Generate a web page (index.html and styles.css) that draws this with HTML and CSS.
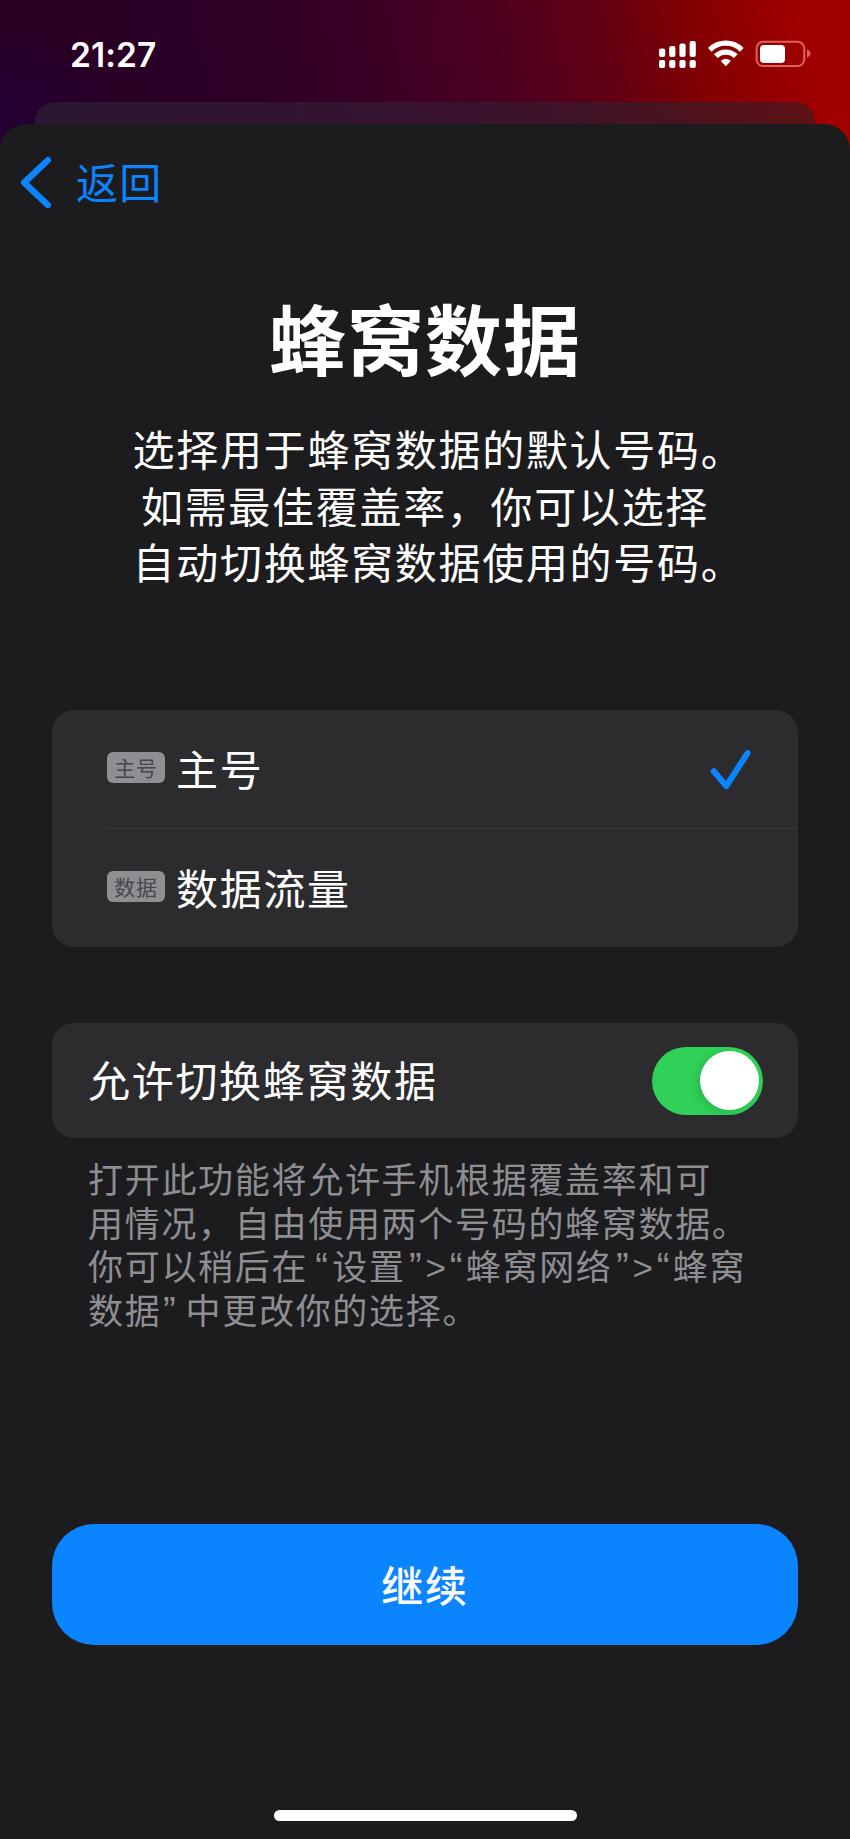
FILE: index.html
```html
<!DOCTYPE html>
<html lang="zh-CN">
<head>
<meta charset="utf-8">
<title>蜂窝数据</title>
<link rel="stylesheet" href="styles.css">
</head>
<body>
<div class="screen">
  <header class="status">
    <span class="time">21:27</span>
    <svg class="status-icons" width="154" height="30" viewBox="658 39 154 30">
      <g fill="#fff">
        <rect x="659" y="48.5" width="6.2" height="8.5" rx="2"/>
        <rect x="669.2" y="46" width="6.2" height="11" rx="2"/>
        <rect x="679.4" y="43.5" width="6.2" height="13.5" rx="2"/>
        <rect x="689.6" y="41" width="6.2" height="16" rx="2"/>
        <rect x="659" y="60" width="6.2" height="8" rx="2"/>
        <rect x="669.2" y="60" width="6.2" height="8" rx="2"/>
        <rect x="679.4" y="60" width="6.2" height="8" rx="2"/>
        <rect x="689.6" y="60" width="6.2" height="8" rx="2"/>
        <path d="M725.8 66.2 L721.2 61.6 Q720.6 60.8 721.5 60.2 Q725.8 57.2 730.1 60.2 Q731 60.8 730.4 61.6 Z"/>
      </g>
      <g fill="none" stroke="#fff" stroke-width="5.2">
        <path d="M709.8 49.8 A22.6 22.6 0 0 1 741.8 49.8"/>
        <path d="M715.8 56.2 A14.2 14.2 0 0 1 735.8 56.2"/>
      </g>
      <rect x="756.6" y="41.8" width="47.6" height="24.2" rx="6.5" fill="none" stroke="#e0625f" stroke-width="2"/>
      <rect x="760" y="45" width="25" height="18" rx="4" fill="#fff"/>
      <path d="M807 49.5 Q810.5 51 810.5 53.6 Q810.5 56.2 807 57.7 Z" fill="#e0625f"/>
    </svg>
  </header>
  <div class="sheet-behind"></div>
  <main class="sheet">
    <nav class="nav">
      <svg class="chevron" width="36" height="56" viewBox="0 0 36 56"><path d="M30.8 5.2 L7.2 27.6 L30.8 50" fill="none" stroke="#0a84ff" stroke-width="6.4" stroke-linecap="round" stroke-linejoin="round"/></svg>
      <span class="back">返回</span>
    </nav>
    <h1 class="title">蜂窝数据</h1>
    <p class="intro"><span class="hang">选择用于蜂窝数据的默认号码。</span><br>如需最佳覆盖率，你可以选择<br><span class="hang">自动切换蜂窝数据使用的号码。</span></p>
    <section class="card lines">
      <div class="row">
        <span class="badge">主号</span><span class="label">主号</span>
        <svg class="check" width="44" height="44" viewBox="0 0 44 44"><path d="M4.7 22.2 L17.3 37 L38.7 3.9" fill="none" stroke="#0a84ff" stroke-width="6" stroke-linecap="round" stroke-linejoin="round"/></svg>
      </div>
      <div class="divider"></div>
      <div class="row">
        <span class="badge">数据</span><span class="label">数据流量</span>
      </div>
    </section>
    <section class="card switch-card">
      <span class="label">允许切换蜂窝数据</span>
      <span class="toggle"><span class="knob"></span></span>
    </section>
    <p class="note">打开此功能将允许手机根据覆盖率和可<br>用情况，自由使用两个号码的蜂窝数据。<br>你可以稍后在<span class="mark before">“</span>设置<span class="mark">”</span><span class="arrow">&gt;</span><span class="mark">“</span>蜂窝网络<span class="mark">”</span><span class="arrow">&gt;</span><span class="mark">“</span>蜂窝<br>数据<span class="mark after">”</span>中更改你的选择。</p>
    <button class="continue">继续</button>
    <div class="home"></div>
  </main>
</div>
</body>
</html>
```
FILE: styles.css
```css
* { box-sizing: border-box; }

body {
  margin: 0;
  background: #1c1c1e;
  color: #fff;
  font-family: "Noto Sans CJK SC", sans-serif;
}

.screen {
  display: flex;
  flex-direction: column;
  width: 850px;
  height: 1839px;
  overflow: hidden;
  background:
    radial-gradient(ellipse 120px 90px at 0 115px, rgba(34, 0, 58, 0.8), transparent),
    linear-gradient(77deg, #280022 0, #2b0027 25%, #390024 44%, #4c0020 59%, #640012 72%, #860000 83%, #a00000 94%) 0 0 / 850px 170px no-repeat,
    #1c1c1e;
}

.status {
  display: flex;
  justify-content: space-between;
  align-items: flex-start;
  height: 102px;
  padding: 39px 38px 0 70px;
}

.time {
  margin-top: -4px;
  font: 600 33.5px/40px Inter, sans-serif;
  letter-spacing: 0.1px;
}

.status-icons { display: block; }

.sheet-behind {
  flex: none;
  height: 22px;
  margin: 0 35px;
  border-radius: 20px 20px 0 0;
  background: linear-gradient(90deg, rgba(44, 30, 52, 0.75), rgba(52, 28, 52, 0.7) 50%, rgba(50, 30, 38, 0.6));
}

.sheet {
  display: flex;
  flex-direction: column;
  flex: none;
  height: 1715px;
  padding: 0 52px;
  border-radius: 26px 26px 0 0;
  background: #1c1c1e;
}

.nav {
  display: flex;
  align-items: center;
  gap: 23px;
  height: 56px;
  margin: 31px 0 0 -35px;
}

.back {
  padding-bottom: 4px;
  color: #0a84ff;
  font-size: 42px;
  line-height: 52px;
  letter-spacing: 1.2px;
}

.title {
  margin: 76px 0 0;
  font-size: 77px;
  font-weight: 700;
  line-height: 100px;
  letter-spacing: 1px;
  text-align: center;
}

.intro {
  margin: 33px 0 0;
  font-size: 42px;
  line-height: 56.7px;
  letter-spacing: 1.7px;
  text-align: center;
  white-space: nowrap;
}

.hang { padding-left: 27px; }

.card {
  flex: none;
  width: 746px;
  border-radius: 22px;
  background: #2c2c2f;
}

.lines {
  height: 237px;
  margin-top: 120px;
}

.row {
  display: flex;
  align-items: center;
  height: 118px;
  padding: 0 45px 0 55px;
}

.badge {
  width: 58px;
  height: 31px;
  margin: -4px 11px 0 0;
  border-radius: 6px;
  background: #8e8e93;
  color: #47474b;
  font-size: 21px;
  line-height: 31px;
  letter-spacing: 0.8px;
  text-align: center;
}

.label {
  padding-bottom: 3px;
  font-size: 42px;
  line-height: 60px;
  letter-spacing: 1.7px;
}

.check { margin: 3px 0 0 auto; }

.divider {
  height: 1px;
  margin-left: 55px;
  background: #3b3b3e;
}

.switch-card {
  display: flex;
  align-items: center;
  justify-content: space-between;
  height: 115px;
  margin-top: 76px;
  padding: 0 35px 0 36px;
}

.toggle {
  display: flex;
  justify-content: flex-end;
  width: 111px;
  height: 68px;
  padding: 4.5px;
  border-radius: 34px;
  background: #30d158;
}

.knob {
  width: 59px;
  height: 59px;
  border-radius: 50%;
  background: #fff;
  box-shadow: -3px 2px 10px rgba(0, 0, 0, 0.13);
}

.note {
  margin: 18px 0 0 36px;
  color: #8e8e93;
  font-size: 35px;
  line-height: 43.6px;
  letter-spacing: 1.7px;
  white-space: nowrap;
}

.mark {
  margin: 0 3.4px;
  font-family: "Liberation Sans", sans-serif;
  font-size: 38px;
  line-height: 1;
  letter-spacing: 0;
}

.arrow {
  margin: 0 0.4px;
  font-family: "Liberation Sans", sans-serif;
  line-height: 1;
  letter-spacing: 0;
}

.before { margin: 0 4.4px 0 7px; }
.after { margin: 0 10px 0 1.5px; }

.continue {
  flex: none;
  width: 746px;
  height: 121px;
  margin-top: 194px;
  padding: 0 0 2px;
  border: 0;
  border-radius: 42px;
  background: #0a84ff;
  color: #fff;
  font: 500 42px/60px "Noto Sans CJK SC", sans-serif;
  letter-spacing: 1.7px;
}

.home {
  flex: none;
  width: 303px;
  height: 11px;
  margin: 165px auto 0;
  border-radius: 6px;
  background: #fff;
}
```
